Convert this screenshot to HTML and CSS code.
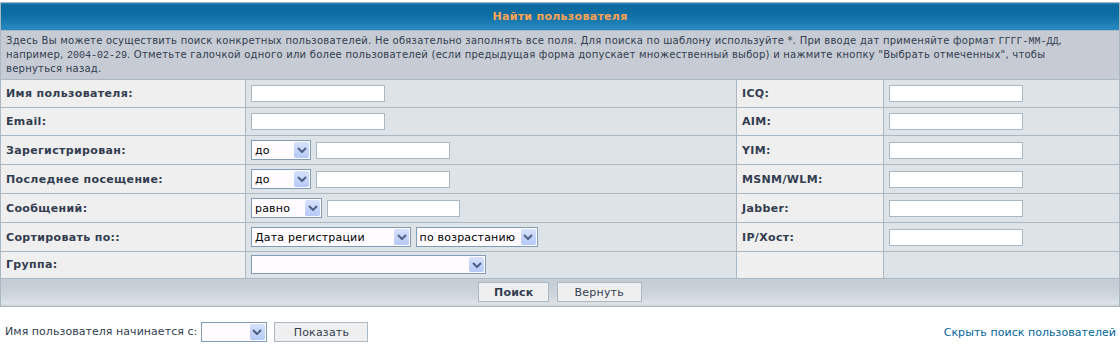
FILE: index.html
```html
<!DOCTYPE html>
<html lang="ru">
<head>
    <meta charset="UTF-8">
    <title>Найти пользователя</title>
    <link rel="stylesheet" href="styles.css">
</head>
<body>
    <form class="search">
        <table class="forumline">
            <colgroup>
                <col class="c1"><col class="c2"><col class="c3"><col class="c4">
            </colgroup>
            <tr>
                <th colspan="4" class="thHead">Найти пользователя</th>
            </tr>
            <tr>
                <td colspan="4" class="row3 explain">
                    Здесь Вы можете осуществить поиск конкретных пользователей. Не обязательно заполнять все поля. Для поиска по шаблону используйте *. При вводе дат применяйте формат <code>ГГГГ-ММ-ДД</code>, например, <code>2004-02-29</code>. Отметьте галочкой одного или более пользователей (если предыдущая форма допускает множественный выбор) и нажмите кнопку "Выбрать отмеченных", чтобы вернуться назад.
                </td>
            </tr>
            <tr>
                <td class="row1 gen">Имя пользователя:</td>
                <td class="row2"><input type="text" class="post"></td>
                <td class="row1 gen">ICQ:</td>
                <td class="row2"><input type="text" class="post"></td>
            </tr>
            <tr>
                <td class="row1 gen">Email:</td>
                <td class="row2"><input type="text" class="post"></td>
                <td class="row1 gen">AIM:</td>
                <td class="row2"><input type="text" class="post"></td>
            </tr>
            <tr>
                <td class="row1 gen">Зарегистрирован:</td>
                <td class="row2">
                    <span class="sel w60"><select><option>до</option><option>после</option></select><span class="arrow"><svg width="10" height="6" viewBox="0 0 10 6"><path d="M1 1 L5 5 L9 1" fill="none" stroke="#4d6185" stroke-width="2"/></svg></span></span>
                    <input type="text" class="post">
                </td>
                <td class="row1 gen">YIM:</td>
                <td class="row2"><input type="text" class="post"></td>
            </tr>
            <tr>
                <td class="row1 gen">Последнее посещение:</td>
                <td class="row2">
                    <span class="sel w60"><select><option>до</option><option>после</option></select><span class="arrow"><svg width="10" height="6" viewBox="0 0 10 6"><path d="M1 1 L5 5 L9 1" fill="none" stroke="#4d6185" stroke-width="2"/></svg></span></span>
                    <input type="text" class="post">
                </td>
                <td class="row1 gen">MSNM/WLM:</td>
                <td class="row2"><input type="text" class="post"></td>
            </tr>
            <tr>
                <td class="row1 gen">Сообщений:</td>
                <td class="row2">
                    <span class="sel w71"><select><option>равно</option><option>меньше</option><option>больше</option></select><span class="arrow"><svg width="10" height="6" viewBox="0 0 10 6"><path d="M1 1 L5 5 L9 1" fill="none" stroke="#4d6185" stroke-width="2"/></svg></span></span>
                    <input type="text" class="post w132">
                </td>
                <td class="row1 gen">Jabber:</td>
                <td class="row2"><input type="text" class="post"></td>
            </tr>
            <tr>
                <td class="row1 gen">Сортировать по::</td>
                <td class="row2">
                    <span class="sel w160"><select><option>Дата регистрации</option></select><span class="arrow"><svg width="10" height="6" viewBox="0 0 10 6"><path d="M1 1 L5 5 L9 1" fill="none" stroke="#4d6185" stroke-width="2"/></svg></span></span>
                    <span class="sel w122"><select><option>по возрастанию</option><option>по убыванию</option></select><span class="arrow"><svg width="10" height="6" viewBox="0 0 10 6"><path d="M1 1 L5 5 L9 1" fill="none" stroke="#4d6185" stroke-width="2"/></svg></span></span>
                </td>
                <td class="row1 gen">IP/Хост:</td>
                <td class="row2"><input type="text" class="post"></td>
            </tr>
            <tr class="last">
                <td class="row1 gen">Группа:</td>
                <td class="row2">
                    <span class="sel w235"><select><option></option></select><span class="arrow"><svg width="10" height="6" viewBox="0 0 10 6"><path d="M1 1 L5 5 L9 1" fill="none" stroke="#4d6185" stroke-width="2"/></svg></span></span>
                </td>
                <td class="row1"></td>
                <td class="row2"></td>
            </tr>
            <tr>
                <td colspan="4" class="catBottom">
                    <button type="submit" class="mainoption">Поиск</button>
                    <button type="reset" class="liteoption">Вернуть</button>
                </td>
            </tr>
        </table>
    </form>

    <div class="bottom">
        <div class="starts">
            Имя пользователя начинается с:
            <span class="sel w66"><select><option></option></select><span class="arrow"><svg width="10" height="6" viewBox="0 0 10 6"><path d="M1 1 L5 5 L9 1" fill="none" stroke="#4d6185" stroke-width="2"/></svg></span></span>
            <button type="button" class="liteoption show">Показать</button>
        </div>
        <a href="#" class="nav">Скрыть поиск пользователей</a>
    </div>
</body>
</html>
```

FILE: styles.css
```css
body {
    margin: 0;
    padding-top: 2px;
    background-color: #ffffff;
    font-family: "DejaVu Sans", Verdana, sans-serif;
    color: #323d4f;
}

.forumline {
    width: 1120px;
    border-collapse: collapse;
    border: 1px solid #a9b8c2;
}

.c1 { width: 245px; }
.c2 { width: 491px; }
.c3 { width: 147px; }

td {
    border: 1px solid #a9b8c2;
    padding: 4px 5px;
    height: 19px;
    font-size: 11px;
    line-height: 13px;
    vertical-align: middle;
}

.thHead {
    height: 27px;
    padding: 0;
    background: linear-gradient(#1a78ad 0, #0a6a9f 2px, #0b6ea4 40%, #2b8ac3 100%);
    color: #ffa34f;
    font-size: 11px;
    font-weight: bold;
    letter-spacing: 0.3px;
    border: 1px solid #a9b8c2;
}

.explain {
    height: auto;
    background-color: #c6cbd4;
    font-size: 10px;
    line-height: 13px;
    letter-spacing: 0.25px;
    color: #323d4f;
    padding: 3px 17px 4px 5px;
}

code {
    font-family: "Liberation Mono", "DejaVu Sans Mono", monospace;
    font-size: 10px;
    letter-spacing: 0;
}

.row1 { background-color: #efefef; }
.row2 { background-color: #dee3e7; }

.last td {
    padding-top: 3px;
    padding-bottom: 4px;
}

.gen {
    font-weight: bold;
    letter-spacing: 0.35px;
    color: #323d4f;
}

input.post {
    width: 134px;
    height: 17px;
    box-sizing: border-box;
    border: 1px solid #a9b8c2;
    background-color: #ffffff;
    margin: 0;
    vertical-align: middle;
    font-size: 11px;
}

input.post.w132 { width: 133px; }

.sel {
    display: inline-flex;
    align-items: stretch;
    height: 20px;
    box-sizing: border-box;
    border: 1px solid #7f9db9;
    background-color: #fffbff;
    vertical-align: middle;
    margin-right: 1px;
}

.last .sel {
    height: 19px;
}

.sel select {
    flex: 1;
    min-width: 0;
    appearance: none;
    -webkit-appearance: none;
    border: none;
    background: transparent;
    font-family: "DejaVu Sans", Verdana, sans-serif;
    font-size: 11px;
    letter-spacing: 0.2px;
    color: #000000;
    padding: 0 0 0 3px;
    margin: 0;
    outline: none;
}

.arrow {
    width: 15px;
    margin: 1px;
    display: flex;
    align-items: center;
    justify-content: center;
    background: linear-gradient(#d6e2fd, #b5c9f7);
    border-radius: 2px;
}

.w60 { width: 60px; }
.w66 { width: 66px; }
.w71 { width: 71px; }
.w160 { width: 160px; }
.w122 { width: 122px; }
.w235 { width: 235px; }

.catBottom {
    height: 20px;
    padding: 3px 5px 4px;
    text-align: center;
    background: linear-gradient(#c3cbd3, #cfd6dc 60%, #dde2e7 90%, #c8ced4 100%);
}

button {
    height: 20px;
    box-sizing: border-box;
    border: 1px solid #a9b8c2;
    background-color: #efefef;
    font-family: "DejaVu Sans", Verdana, sans-serif;
    font-size: 11px;
    letter-spacing: 0.2px;
    color: #323d4f;
    padding: 0;
    margin: 0 2px;
    vertical-align: middle;
}

.mainoption {
    width: 71px;
    font-weight: bold;
}

.liteoption {
    width: 85px;
}

.bottom {
    display: flex;
    justify-content: space-between;
    align-items: center;
    margin-top: 15px;
    padding: 0 4px 0 5px;
    font-size: 11px;
    letter-spacing: 0.05px;
}

.starts {
    color: #323d4f;
}

.starts .sel {
    margin-left: 0;
}

.show {
    width: 94px;
    margin-left: 3px;
}

a.nav {
    color: #006699;
    text-decoration: none;
}
```
